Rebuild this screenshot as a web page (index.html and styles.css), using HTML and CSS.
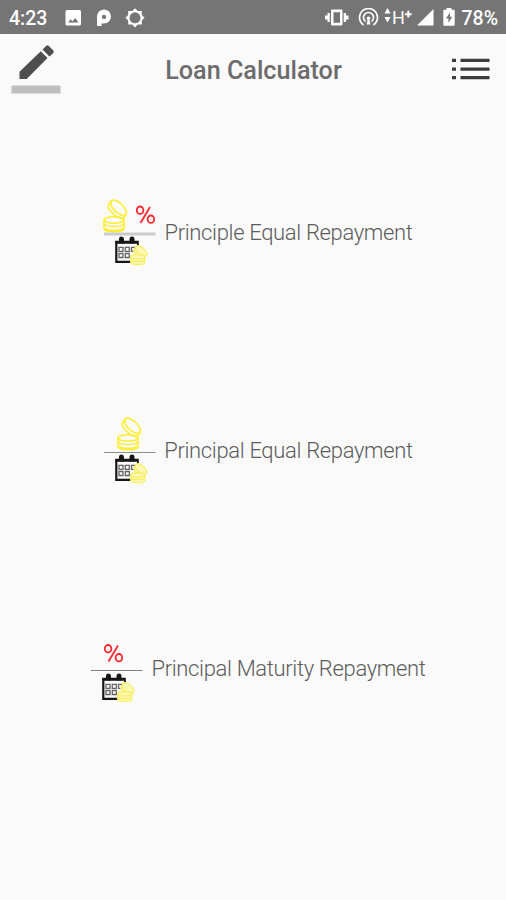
FILE: index.html
```html
<!DOCTYPE html>
<html lang="en">
<head>
    <meta charset="UTF-8">
    <meta name="viewport" content="width=device-width, initial-scale=1.0">
    <title>Loan Calculator</title>
    <link rel="stylesheet" href="styles.css">
</head>
<body>

    <!-- shared icon parts -->
    <svg class="defs" width="0" height="0">
        <defs>
            <g id="coins" fill="none" stroke="#ffee2e" stroke-width="1.6">
                <ellipse cx="15.500" cy="9.800" rx="10" ry="4.600" transform="rotate(44 15.500 9.800)"/>
                <path d="M8.300 3L5.500 7C4 11 13 20.500 20 20.800l3.500-4.800"/>
                <ellipse cx="11" cy="22" rx="10" ry="3.200"/>
                <path d="M1 22v8.500c0 4.300 20 4.300 20 0V22M1.200 26.200c3 3 16.600 3 19.600 0M1.200 30c3 3 16.600 3 19.600 0"/>
            </g>
            <g id="percent" fill="none" stroke="#fa2630" stroke-width="1.8">
                <ellipse cx="4.600" cy="4.700" rx="3.300" ry="3.700"/>
                <ellipse cx="15.400" cy="13.700" rx="3.300" ry="3.700"/>
                <path d="M14.500 1.500L5 17.500"/>
            </g>
            <g id="calendar">
                <path d="M1.800 4V24.300H17" fill="none" stroke="#161616" stroke-width="2.2"/>
                <path d="M.7 3.200h23.600v3H.7zM22.500 4h1.800v7h-1.800z" fill="#161616"/>
                <path d="M4.500 1.500a2.500 2.500 0 0 1 5 0V6h-5zM15 1.500a2.500 2.500 0 0 1 5 0V6h-5z" fill="#161616"/>
                <path d="M4.500 9.800h4v4h-4zM10.800 9.800h4v4h-4zM17 9.800h4v4h-4zM4.500 16h4v4h-4zM10.800 16h4v4h-4z" fill="none" stroke="#666" stroke-width="1.300"/>
                <g fill="#fbf8b4" stroke="#f8ee62" stroke-width="1.200">
                    <path d="M21.500 9.500l-2.500 3.500q2 7 10 7.500l3.500-3.500z"/>
                    <ellipse cx="26.500" cy="13.500" rx="7" ry="3.600" transform="rotate(42 26.500 13.500)"/>
                    <path d="M16.200 19.300v6c0 2.500 14 2.500 14 0v-6z"/>
                    <ellipse cx="23.200" cy="19.300" rx="7" ry="2.200"/>
                    <path d="M16.200 22.800c2 1.800 12 1.800 14 0" fill="none"/>
                </g>
            </g>
        </defs>
    </svg>

    <div class="status-bar">
        <span class="time">4:23</span>
        <svg class="status-left" width="82" height="20" viewBox="0 0 82 20" fill="#fff">
            <path fill-rule="evenodd" d="M2 2h12.500a1.500 1.500 0 0 1 1.500 1.500v12.500a1.500 1.500 0 0 1-1.500 1.500H2a1.500 1.500 0 0 1-1.500-1.500V3.500A1.500 1.500 0 0 1 2 2zM3 14.500h10.500l-3.300-4.500-2.600 3.200-1.800-2z"/>
            <path fill-rule="evenodd" d="M32 18V9a7 7 0 1 1 7 6.500H36.500V18zM39 6.700a2.200 2.200 0 1 0 0 4.400a2.200 2.200 0 1 0 0-4.400z"/>
            <path fill-rule="evenodd" d="M70 .3l2.800 2.800h4v4l2.800 2.700-2.800 2.800v4h-4L70 19.400l-2.800-2.800h-4v-4l-2.800-2.800 2.800-2.700v-4h4zM70 4.300a5.500 5.500 0 1 0 0 11a5.500 5.500 0 1 0 0-11z"/>
        </svg>
        <svg class="status-right" width="132" height="20" viewBox="0 0 132 20" fill="#fff">
            <path fill-rule="evenodd" d="M7 1.500h9.500a1 1 0 0 1 1 1v14a1 1 0 0 1-1 1H7a1 1 0 0 1-1-1v-14a1 1 0 0 1 1-1zM8.500 4.200v10.600H15V4.200z"/>
            <path d="M2.500 5h2.300v9H2.500zM0 7.500h2.500v4H0zM18.700 5H21v9h-2.300zM21 7.500h2.500v4H21z"/>
            <g fill="none" stroke="#fff" stroke-width="1.600">
                <path d="M38.500 17a9 9 0 1 1 10 0"/>
                <path d="M40.500 13.500a5 5 0 1 1 6 0"/>
            </g>
            <circle cx="43.500" cy="10.300" r="1.800"/>
            <path d="M42.800 11h1.400l1.200 5.500h-3.800z"/>
            <path d="M62.500 0l3 5.500h-6zM62.500 14.500l3-5.500h-6z"/>
            <text class="network" x="67" y="15.500">H</text>
            <path d="M80 5.200h2.300V2.800h2v2.400h2.300v2h-2.300v2.400h-2V7.200H80z"/>
            <path d="M108.500 1v16.500H92z"/>
            <path fill-rule="evenodd" d="M121.500 0h5v1.800h2.200a1 1 0 0 1 1 1v14a1 1 0 0 1-1 1h-9.400a1 1 0 0 1-1-1v-14a1 1 0 0 1 1-1h2.200zM125 4.500l-4 6h2.500v4.500l3.700-6.200H125z"/>
        </svg>
        <span class="battery">78%</span>
    </div>

    <div class="toolbar">
        <button class="edit">
            <svg width="50" height="50" viewBox="0 0 50 50">
                <path d="M8.500 35v-7.200L29.800 7.300l6.700 6.800L15.700 35zM31.500 5.500l3.800-3.700q1.300-1 2.600.2l4.400 4.500q1 1.200 0 2.400l-3.800 3.700z" fill="#4e4e4e"/>
                <path d="M.5 41.500h49v8H.5z" fill="#bebebe"/>
            </svg>
        </button>
        <h1 class="title">Loan Calculator</h1>
        <button class="menu">
            <svg width="38" height="22" viewBox="0 0 38 22">
                <path d="M0 .8h4v3.300H0zM0 9.500h4v3.300H0zM0 18h4v3.300H0zM8.500.8h29v3.300h-29zM8.500 9.500h29v3.300h-29zM8.500 18h29v3.300h-29z" fill="#3c3c3c"/>
            </svg>
        </button>
    </div>

    <div class="options">
        <a class="option">
            <svg width="53" height="70" viewBox="0 0 53 70">
                <use href="#coins" y="1"/>
                <use href="#percent" x="32.500" y="8.500"/>
                <path d="M1 35.500h51.500v3H1z" fill="#cbcbcb"/>
                <use href="#calendar" x="11.500" y="40.500"/>
            </svg>
            <span>Principle Equal Repayment</span>
        </a>
        <a class="option">
            <svg width="53" height="70" viewBox="0 0 53 70">
                <use href="#coins" x="14" y="1"/>
                <path d="M1 37h51.500v1H1z" fill="#8e8e8e"/>
                <use href="#calendar" x="11.500" y="40.500"/>
            </svg>
            <span>Principal Equal Repayment</span>
        </a>
        <a class="option">
            <svg width="53" height="70" viewBox="0 0 53 70">
                <use href="#percent" x="13.500" y="10"/>
                <path d="M1 36h51.500v1H1z" fill="#808080"/>
                <use href="#calendar" x="11.500" y="40.500"/>
            </svg>
            <span>Principal Maturity Repayment</span>
        </a>
    </div>

</body>
</html>
```

FILE: styles.css
```css
* {
    box-sizing: border-box;
}
body {
    margin: 0;
    height: 100vh;
    display: flex;
    flex-direction: column;
    overflow: hidden;
    background-color: #fafafa;
    color: #6c6c6c;
    font-family: Roboto, sans-serif;
}
.defs {
    position: absolute;
}
.status-bar {
    height: 34px;
    flex-shrink: 0;
    padding: 2px 8px 0 9px;
    display: flex;
    align-items: center;
    background-color: #757575;
    color: #fff;
    font-size: 19.5px;
    font-weight: 500;
}
.time {
    width: 56px;
}
.status-right {
    margin-left: auto;
    margin-right: 4px;
}
.network {
    font-size: 18px;
    font-weight: 400;
}
.toolbar {
    height: 70px;
    flex-shrink: 0;
    padding: 0 16px 0 11px;
    display: flex;
    align-items: center;
    justify-content: space-between;
}
.toolbar button {
    padding: 0;
    border: none;
    background: none;
    cursor: pointer;
}
.toolbar svg {
    display: block;
}
.edit {
    margin-bottom: 1px;
}
.title {
    margin: 0 0 0 -6px;
    padding-top: 2px;
    font-size: 25.2px;
    font-weight: 500;
}
.options {
    height: 655px;
    margin-top: 19px;
    padding-left: 10px;
    display: grid;
    grid-template-rows: repeat(3, 1fr);
}
.option {
    display: flex;
    align-items: center;
    justify-content: center;
    gap: 8px;
    color: #5c5c5c;
    font-size: 22px;
    font-weight: 300;
    letter-spacing: -0.34px;
}
```
